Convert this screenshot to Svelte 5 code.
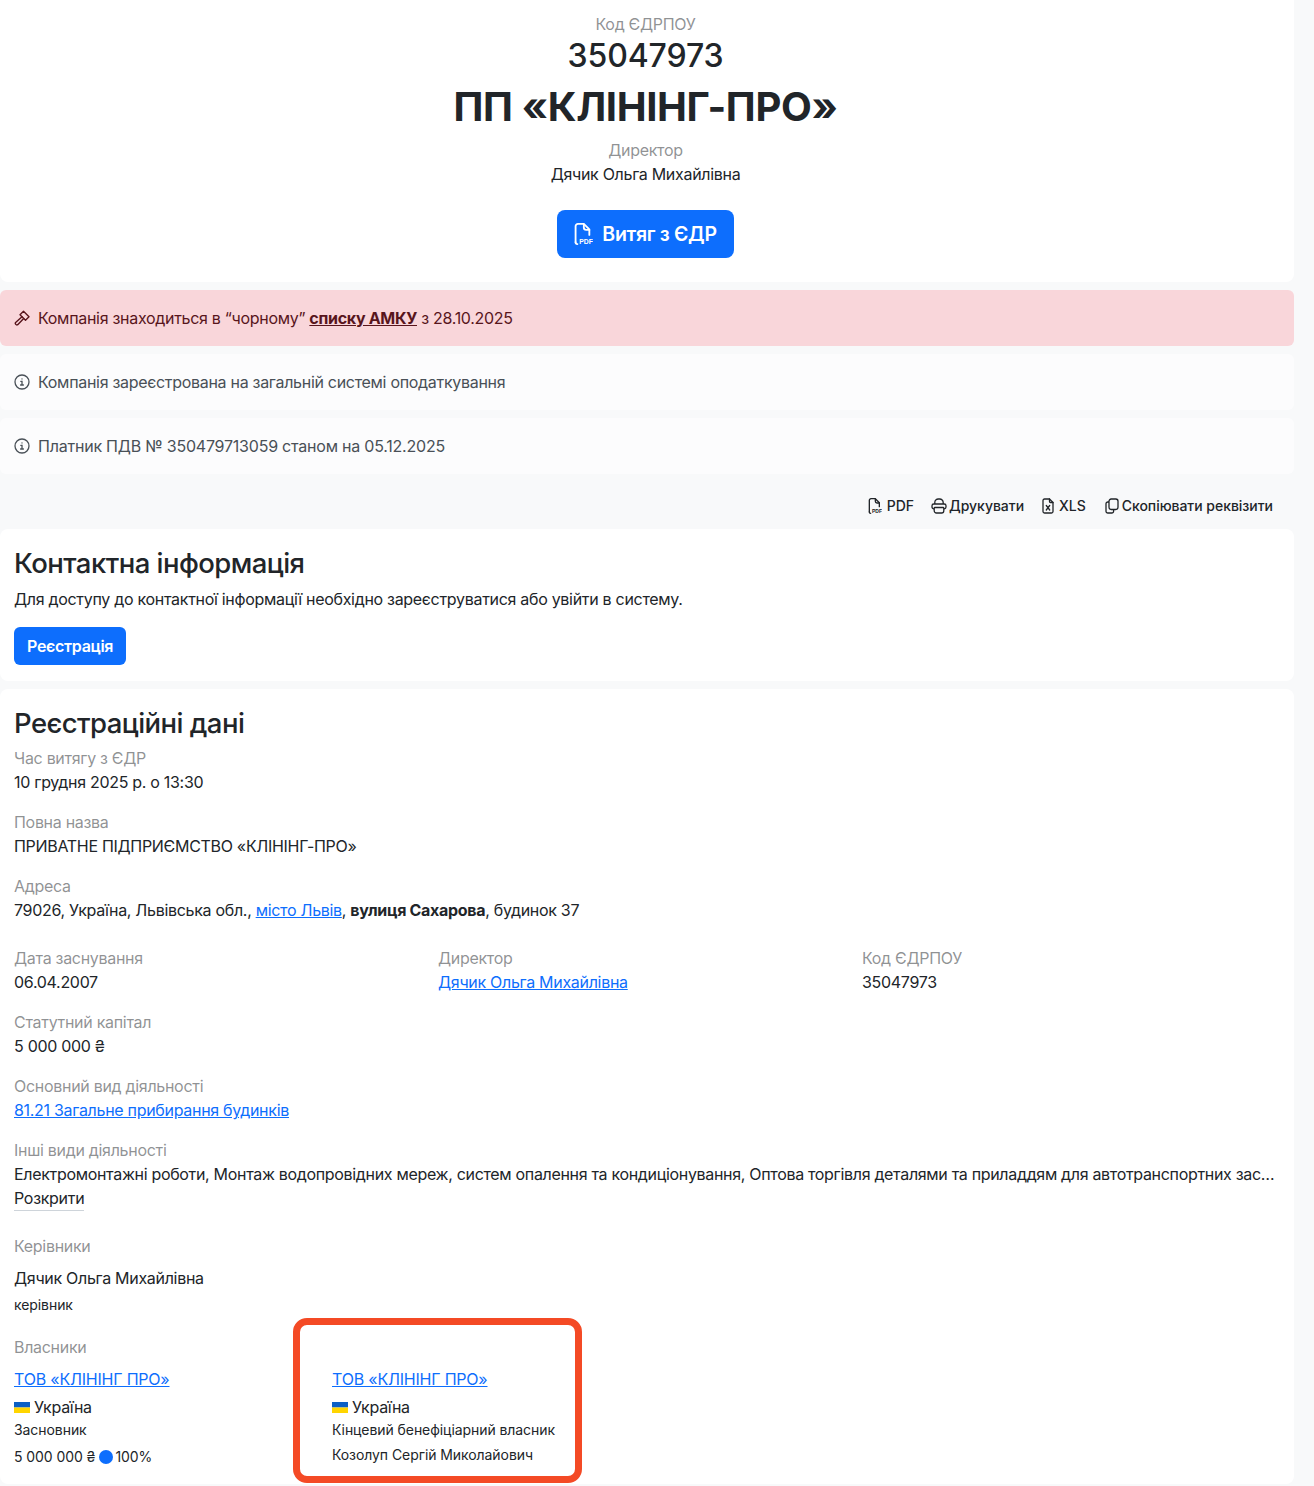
<script>
	const activities = 'Електромонтажні роботи, Монтаж водопровідних мереж, систем опалення та кондиціонування, Оптова торгівля деталями та приладдям для автотранспортних зас…';
</script>

{#snippet pdfIcon(cls)}
	<svg class={cls} viewBox="0 0 24 24" fill="none" stroke="currentColor" stroke-width="2" stroke-linecap="round" stroke-linejoin="round">
		<path d="M5 21V3.500A2.500 2.500 0 0 1 7.500 1H14l6 6v6" />
		<path d="M14 1.500V5a2.500 2.500 0 0 0 2.500 2.500H20" />
		<path d="M5 21a2 2 0 0 0 2 2" />
		<text x="9" y="23" class="pdf-mark" fill="currentColor" stroke="none">PDF</text>
	</svg>
{/snippet}

{#snippet infoIcon()}
	<svg class="ico-info" viewBox="0 0 16 16" fill="none" stroke="currentColor" stroke-width="1.3" stroke-linecap="round">
		<circle cx="8" cy="8" r="7" />
		<path d="M6.800 7.300H8v3.600M6.600 11h2.800" />
		<circle cx="8" cy="4.900" r=".7" fill="currentColor" stroke="none" />
	</svg>
{/snippet}

{#snippet flag()}
	<svg class="flag" viewBox="0 0 16 11"><rect width="16" height="5.500" fill="#0b5fc4" /><rect y="5.500" width="16" height="5.500" fill="#ffd500" /></svg>
{/snippet}

<div class="page">
	<section class="card hero">
		<div class="muted">Код ЄДРПОУ</div>
		<div class="code">35047973</div>
		<h1>ПП «КЛІНІНГ-ПРО»</h1>
		<div class="muted">Директор</div>
		<div>Дячик Ольга Михайлівна</div>
		<button class="btn btn-lg">{@render pdfIcon('ico')}Витяг з ЄДР</button>
	</section>

	<div class="alert danger">
		<svg class="ico-info" viewBox="0 0 16 16" fill="none" stroke="currentColor" stroke-width="1.400" stroke-linejoin="round" stroke-linecap="round">
			<path d="M9.500 1.200 15 6.700 11.500 10.200 6 4.700z" />
			<path d="M8 6.700 1.600 12.400a1.600 1.600 0 0 0 2.100 2.300L9.700 8.500" />
		</svg>
		<span>Компанія знаходиться в “чорному” <a href="#amku">списку АМКУ</a> з 28.10.2025</span>
	</div>
	<div class="alert info">{@render infoIcon()}<span>Компанія зареєстрована на загальній системі оподаткування</span></div>
	<div class="alert info">{@render infoIcon()}<span class="vat">Платник ПДВ № 350479713059 станом на 05.12.2025</span></div>

	<div class="tools">
		<span class="tool tool-pdf">{@render pdfIcon('tool-ico')}PDF</span>
		<span class="tool tool-print">
			<svg class="tool-ico" viewBox="0 0 16 16" fill="none" stroke="currentColor" stroke-width="1.300" stroke-linejoin="round">
				<path d="M3.800 6V4.500A3.500 3.500 0 0 1 7.300 1h1.400a3.500 3.500 0 0 1 3.500 3.500V6" />
				<rect x="1" y="6" width="14" height="4.800" rx="1.800" />
				<path d="M4 9.500h8a.8.8 0 0 1 .8.8v2.500A2.200 2.200 0 0 1 10.600 15H5.400a2.200 2.200 0 0 1-2.200-2.200v-2.500a.8.8 0 0 1 .8-.8z" fill="#f8f9fa" />
			</svg>Друкувати
		</span>
		<span class="tool tool-xls">
			<svg class="tool-ico" viewBox="0 0 16 16" fill="none" stroke="currentColor" stroke-width="1.300" stroke-linecap="round" stroke-linejoin="round">
				<path d="M9.500 1H4.500A1.500 1.500 0 0 0 3 2.500v11A1.500 1.500 0 0 0 4.500 15h7a1.500 1.500 0 0 0 1.500-1.500V4.500z" />
				<path d="M9.500 1v2.500a1 1 0 0 0 1 1H13M6.300 7.500l3.400 4.500M9.700 7.500 6.300 12" />
			</svg>XLS
		</span>
		<span class="tool">
			<svg class="tool-ico" viewBox="0 0 16 16" fill="none" stroke="currentColor" stroke-width="1.300" stroke-linejoin="round">
				<rect x="5" y="1" width="9" height="10.500" rx="2.200" />
				<path d="M5 4H3.800A1.800 1.800 0 0 0 2 5.800v7.400A1.800 1.800 0 0 0 3.800 15h4a1.800 1.800 0 0 0 1.800-1.800v-1.700" />
			</svg>Скопіювати реквізити
		</span>
	</div>

	<section class="card block contact">
		<h2>Контактна інформація</h2>
		<p>Для доступу до контактної інформації необхідно зареєструватися або увійти в систему.</p>
		<button class="btn">Реєстрація</button>
	</section>

	<section class="card block reg">
		<h2>Реєстраційні дані</h2>
		<div class="field">
			<div class="muted">Час витягу з ЄДР</div>
			<div>10 грудня 2025 р. о 13:30</div>
		</div>
		<div class="field">
			<div class="muted">Повна назва</div>
			<div>ПРИВАТНЕ ПІДПРИЄМСТВО «КЛІНІНГ-ПРО»</div>
		</div>
		<div class="field">
			<div class="muted">Адреса</div>
			<div>79026, Україна, Львівська обл., <a href="#lviv">місто Львів</a>, <b>вулиця Сахарова</b>, будинок 37</div>
		</div>

		<div class="cols">
			<div>
				<div class="muted">Дата заснування</div>
				<div>06.04.2007</div>
			</div>
			<div>
				<div class="muted">Директор</div>
				<div><a href="#director">Дячик Ольга Михайлівна</a></div>
			</div>
			<div>
				<div class="muted">Код ЄДРПОУ</div>
				<div>35047973</div>
			</div>
		</div>

		<div class="field">
			<div class="muted">Статутний капітал</div>
			<div>5 000 000 ₴</div>
		</div>
		<div class="field">
			<div class="muted">Основний вид діяльності</div>
			<div><a href="#kved">81.21 Загальне прибирання будинків</a></div>
		</div>
		<div class="field wide">
			<div class="muted">Інші види діяльності</div>
			<div class="clip">{activities}</div>
			<span class="more">Розкрити</span>
		</div>
		<div class="field leaders">
			<div class="muted">Керівники</div>
			<div class="person">Дячик Ольга Михайлівна</div>
			<div class="small role">керівник</div>
		</div>

		<div class="muted">Власники</div>
		<div class="owners">
			<div class="owner">
				<a href="#owner">ТОВ «КЛІНІНГ ПРО»</a>
				<div class="country">{@render flag()}Україна</div>
				<div class="small">Засновник</div>
				<div class="small share">5 000 000 ₴<i class="dot"></i>100%</div>
			</div>
			<div class="owner marked">
				<a href="#owner">ТОВ «КЛІНІНГ ПРО»</a>
				<div class="country">{@render flag()}Україна</div>
				<div class="small">Кінцевий бенефіціарний власник</div>
				<div class="small person-name">Козолуп Сергій Миколайович</div>
			</div>
		</div>
	</section>
</div>

<style>
	:global(body) {
		background: #f8f9fa;
		color: #212529;
		font-family: Inter, "Noto Sans", sans-serif;
		font-size: 16px;
		line-height: 24px;
		letter-spacing: -0.3px;
	}

	.page {
		width: 1294px;
		padding-bottom: 2px;
	}

	.card {
		background: #fff;
		border-radius: 0 0 8px 8px;
	}

	.hero {
		display: flex;
		flex-direction: column;
		align-items: center;
		padding: 12px 3px 24px 0;
	}

	.muted {
		color: rgba(33, 37, 41, 0.5);
	}

	.code {
		font-size: 32px;
		line-height: 40px;
		font-weight: 500;
		letter-spacing: -0.1px;
	}

	h1 {
		margin: 0;
		font-size: 40px;
		line-height: 62px;
		font-weight: 700;
		letter-spacing: -0.35px;
	}

	.btn {
		display: inline-flex;
		align-items: center;
		background: #0d6efd;
		color: #fff;
		border: 0;
		border-radius: 6px;
		font: 600 16px/24px Inter, sans-serif;
		letter-spacing: -0.3px;
		padding: 7px 13px;
		width: fit-content;
	}

	.btn-lg {
		margin-top: 24px;
		font-size: 19.500px;
		line-height: 30px;
		letter-spacing: -0.3px;
		border-radius: 8px;
		padding: 9px 17px 9px 14px;
		gap: 9px;
	}

	.ico {
		width: 22px;
		height: 22px;
	}

	.pdf-mark {
		font-family: "Liberation Sans", sans-serif;
		font-size: 7.500px;
		font-weight: 700;
		letter-spacing: 0;
	}

	.ico-info {
		width: 16px;
		height: 16px;
		flex: none;
	}

	.alert {
		display: flex;
		align-items: center;
		gap: 8px;
		height: 56px;
		margin-top: 8px;
		padding: 0 14px;
		border-radius: 6px;
		box-sizing: border-box;
	}

	.danger {
		background: #f9d6da;
		color: #58151c;
	}

	.danger a {
		color: inherit;
		font-weight: 700;
	}

	.info {
		background: #fcfcfd;
		color: #495057;
	}

	.vat {
		letter-spacing: -0.22px;
	}

	.tools {
		display: flex;
		justify-content: flex-end;
		align-items: center;
		gap: 18px;
		height: 55px;
		padding: 9px 21px 0 0;
		box-sizing: border-box;
		font-size: 14px;
		font-weight: 500;
		letter-spacing: -0.03px;
	}

	.tool {
		display: inline-flex;
		align-items: center;
		gap: 2px;
	}

	.tool-pdf {
		gap: 5px;
	}

	.tool-print {
		margin-left: -1px;
	}

	.tool-xls {
		gap: 3px;
		margin-left: -2px;
	}

	.tool-ico {
		width: 16px;
		height: 16px;
		flex: none;
	}

	.block {
		border-radius: 8px;
		padding: 14px 14px 0;
	}

	.contact {
		height: 152px;
		box-sizing: border-box;
		margin-bottom: 8px;
	}

	h2 {
		margin: 0 0 3px;
		font-size: 27.500px;
		line-height: 40px;
		font-weight: 500;
		letter-spacing: -0.55px;
	}

	.contact h2 {
		margin-bottom: 4px;
	}

	.contact p {
		margin: 0 0 16px;
	}

	.reg {
		height: 795px;
		box-sizing: border-box;
	}

	.field {
		margin-bottom: 16px;
	}

	.wide {
		margin-bottom: 23px;
	}

	.leaders {
		margin-bottom: 20px;
	}

	.cols {
		display: grid;
		grid-template-columns: repeat(3, 424px);
		margin: 24px 0 16px;
	}

	a {
		color: #0d6efd;
	}

	.clip {
		white-space: nowrap;
		letter-spacing: -0.32px;
	}

	.more {
		display: inline-block;
		line-height: 23px;
		border-bottom: 1px solid #ced4da;
	}

	.person {
		margin-top: 8px;
	}

	.small {
		font-size: 14px;
		line-height: 21px;
		letter-spacing: -0.07px;
	}

	.role {
		margin-top: 4px;
	}

	.owners {
		display: grid;
		grid-template-columns: 318px 260px;
		margin-top: 8px;
	}

	.owner {
		position: relative;
	}

	.owner > a {
		letter-spacing: -0.2px;
	}

	.country {
		display: flex;
		align-items: center;
		gap: 4px;
		margin-top: 4px;
	}

	.flag {
		width: 16px;
		height: 11px;
	}

	.share {
		display: flex;
		align-items: center;
		margin-top: 6px;
	}

	.person-name {
		margin-top: 4px;
	}

	.dot {
		width: 14px;
		height: 14px;
		margin: 0 2px 0 4px;
		border-radius: 50%;
		background: #0d6efd;
	}

	.marked::after {
		content: "";
		position: absolute;
		left: -39px;
		top: -49px;
		width: 289px;
		height: 165px;
		box-sizing: border-box;
		border: 7px solid #f44a25;
		border-radius: 14px;
	}
</style>
